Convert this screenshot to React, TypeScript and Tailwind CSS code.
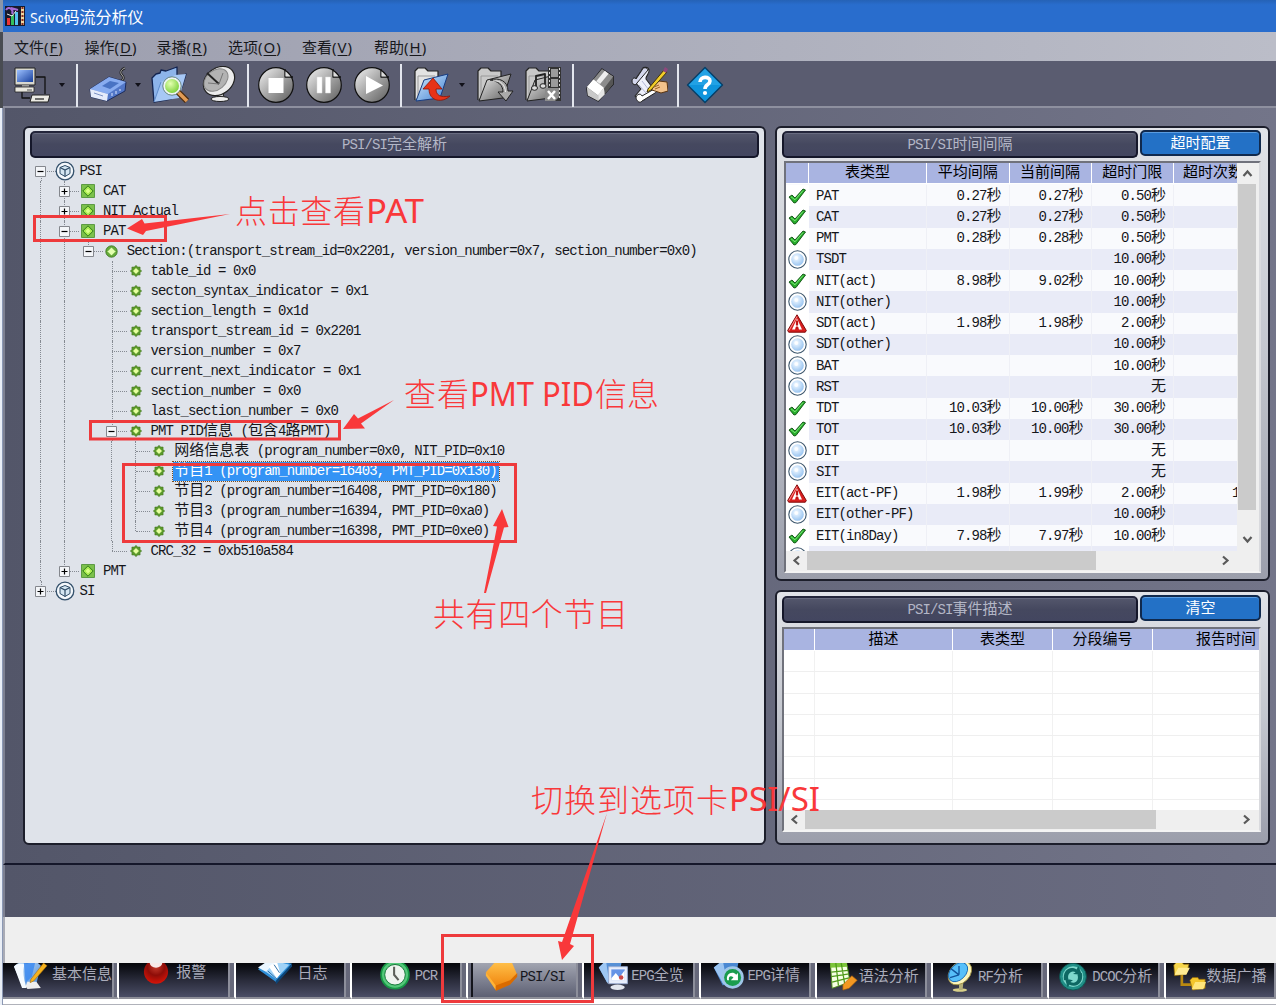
import React from 'react';

const CJK = /([\u2e80-\u9fff\uff00-\uffef]+)/;

/* Mixed text: 7.5px Latin cells and 15px Chinese cells */
function T({ children }: { children: string }) {
  return (
    <span className="whitespace-pre font-['Liberation_Mono','Noto_Sans_CJK_SC',monospace] text-[14px] leading-[20px] tracking-[-0.9px]">
      {children.split(CJK).map((s, i) =>
        i % 2 ? (
          <span key={i} className="font-['Noto_Sans_CJK_SC',sans-serif] text-[15px] leading-[16px] tracking-normal">
            {s}
          </span>
        ) : (
          s
        ),
      )}
    </span>
  );
}

/* ---------- gradients shared by the icons ---------- */
function Defs() {
  return (
    <svg className="absolute h-0 w-0">
      <defs>
        <linearGradient id="gray" x1="0" y1="0" x2="1" y2="1">
          <stop offset="0" stopColor="#f4f4f4" />
          <stop offset=".5" stopColor="#a5a5a5" />
          <stop offset="1" stopColor="#5c5c5c" />
        </linearGradient>
        <linearGradient id="blue" x1="0" y1="0" x2="1" y2="1">
          <stop offset="0" stopColor="#d6ecff" />
          <stop offset="1" stopColor="#3d7fd0" />
        </linearGradient>
        <linearGradient id="orange" x1="0" y1="0" x2="0" y2="1">
          <stop offset="0" stopColor="#ffc04a" />
          <stop offset="1" stopColor="#ee7d05" />
        </linearGradient>
        <linearGradient id="screen" x1="0" y1="0" x2="1" y2="1">
          <stop offset="0" stopColor="#9cc0ff" />
          <stop offset="1" stopColor="#173f9c" />
        </linearGradient>
        <radialGradient id="ball" cx=".4" cy=".35" r=".7">
          <stop offset="0" stopColor="#f6fbff" />
          <stop offset=".4" stopColor="#cfe5fb" />
          <stop offset="1" stopColor="#93c0ee" />
        </radialGradient>
        <radialGradient id="red" cx=".5" cy=".3" r=".7">
          <stop offset="0" stopColor="#c43a2c" />
          <stop offset=".5" stopColor="#8e0d08" />
          <stop offset="1" stopColor="#d81408" />
        </radialGradient>
        <radialGradient id="green" cx=".4" cy=".35" r=".7">
          <stop offset="0" stopColor="#e4ffb0" />
          <stop offset="1" stopColor="#6fcb2c" />
        </radialGradient>
      </defs>
    </svg>
  );
}

function Ico({ children, s = 38 }: { children: React.ReactNode; s?: number }) {
  return (
    <svg width={s} height={s} viewBox="0 0 38 38" className="shrink-0" strokeLinejoin="round">
      {children}
    </svg>
  );
}

const Network = () => (
  <Ico>
    <path d="M24 11h9v17M10 25v7h8" fill="none" stroke="#111" strokeWidth="1.3" />
    <path d="M3 2h20v17H3z" fill="#d9d8cf" stroke="#222" />
    <path d="M5 4h16v12H5z" fill="url(#screen)" />
    <path d="M10 19h7v2h-7z" fill="#999" />
    <path d="M3 21h19v5H3z" fill="#e9e8df" stroke="#222" strokeWidth=".8" />
    <path d="M15 24h5" stroke="#555" />
    <path d="M20 29h18l-2 7H18z" fill="#ecebe4" stroke="#222" />
    <path d="M23 33h9" stroke="#444" strokeWidth="1.5" />
  </Ico>
);
const Device = () => (
  <Ico>
    <path d="M28 15c6 1 8-3 5-6s0-6 3-7" fill="none" stroke="#222" strokeWidth="2.4" />
    <path d="M28 15c6 1 8-3 5-6s0-6 3-7" fill="none" stroke="#aaa" strokeWidth="1" />
    <path d="M1 23 20 11l17 5-1 9-18 10L2 31z" fill="#5277c8" stroke="#1d2c5c" />
    <path d="M1 23 20 11l17 5-18 12z" fill="#88acf0" />
    <path d="m13 20 8-5 9 2-9 6z" fill="#4973c4" />
    <path d="m1 23 18 5-1 7L2 31z" fill="#e5ebfa" />
    <path d="m5 27 9 3" stroke="#7b90c4" />
    <path d="M23 30v-3m4 1v-3m4 0v-2" stroke="#dce8ff" />
  </Ico>
);
const FolderFind = () => (
  <Ico>
    <path d="M1 12 5 8l4-1 1-3 5 1 11-4v12l9-5-4 13L20 33 3 36z" fill="#8db4ea" stroke="#132450" strokeWidth="1.3" />
    <path d="m3 36 7-20 14-7 11-1-7 24z" fill="#a7c8f5" />
    <path d="m3 36 7-20" stroke="#5f8ccc" />
    <path d="m27 26 9 9" stroke="#4b2a0c" strokeWidth="6" />
    <path d="m27 26 9 9" stroke="#e19b55" strokeWidth="3.5" />
    <circle cx="21" cy="20" r="8" fill="url(#green)" stroke="#eef4f4" strokeWidth="2" />
    <circle cx="21" cy="20" r="9.2" fill="none" stroke="#4d6a55" strokeWidth=".7" />
  </Ico>
);
const Dish = () => (
  <Ico>
    <path d="M18 25h5l1 8h-7z" fill="#ccc" stroke="#222" />
    <ellipse cx="20" cy="33" rx="9" ry="2.5" fill="#eee" stroke="#222" />
    <ellipse cx="19" cy="15" rx="17" ry="13" transform="rotate(-38 19 15)" fill="#ececec" stroke="#222" strokeWidth="1.2" />
    <ellipse cx="16" cy="14" rx="13.500" ry="9.500" transform="rotate(-40 16 14)" fill="#b3b3b3" stroke="#888" />
    <path d="m19 18-12-11" stroke="#222" strokeWidth="1.800" />
    <path d="M19 18 8 17m11 1 4-11" stroke="#777" />
  </Ico>
);
const Media = ({ kind }: { kind: 'stop' | 'pause' | 'play' }) => (
  <Ico>
    <circle cx="19" cy="19" r="17.300" fill="url(#gray)" stroke="#111" strokeWidth="1.200" />
    <path d="M28 3v8h8" fill="none" stroke="#111" strokeWidth="1.300" />
    <path d="M28.500 5.500v5h5z" fill="#ddd" />
    {kind === 'stop' && <path d="M11.500 12h15v15h-15z" fill="#fff" />}
    {kind === 'pause' && <path d="M12 11h5v16h-5zM20.500 11h5v16h-5z" fill="#fff" stroke="#ddd" strokeWidth=".5" />}
    {kind === 'play' && <path d="m13 10 17 9.500L13 28z" fill="#fff" />}
  </Ico>
);
const FolderBase = ({ blue = false }: { blue?: boolean }) => (
  <>
    <path d="M2 34V5l3-3h7l3 3h10v7" fill={blue ? '#e3e3e3' : '#c9c9c9'} stroke="#222" strokeWidth="1.200" />
    <path d="M5 34V10h17" fill="none" stroke="#999" />
    <path d="M3 35 11 14l24-6-8 24z" fill={blue ? 'url(#blue)' : 'url(#gray)'} stroke={blue ? '#183c80' : '#222'} />
  </>
);
const FolderUp = () => (
  <Ico>
    <FolderBase blue />
    <path d="m20 12 9 11h-6c0 6 4 9 14 7-7 7-21 6-21-7h-6z" fill="#e83317" stroke="#8a1506" strokeWidth=".8" />
  </Ico>
);
const FolderDown = () => (
  <Ico>
    <FolderBase />
    <path d="M14 14c9-3 18 1 18 11h5l-7 10-8-9h5c0-7-5-11-13-12z" fill="#aaa" stroke="#222" />
    <path d="M17 15c8-1 12 4 12.500 11" fill="none" stroke="#eee" />
  </Ico>
);
const Film = () => (
  <Ico>
    <FolderBase />
    <path d="M12 21V10l9-2v11" fill="none" stroke="#222" strokeWidth="1.800" />
    <ellipse cx="10.500" cy="22" rx="3" ry="2.300" fill="#ddd" stroke="#222" />
    <ellipse cx="19" cy="20" rx="3" ry="2.300" fill="#ddd" stroke="#222" />
    <path d="M24 1h13v34H24z" fill="#333" />
    <path d="M27 3h7v8h-7zM27 13h7v8h-7z" fill="#9b9b9b" />
    <path d="M25.500 2v32M35.500 2v32" stroke="#ddd" strokeDasharray="2 2" />
    <path d="M21 22h14v9l-4 4H21z" fill="#8c8c8c" />
    <path d="m24 25 7 8m0-8-7 8" stroke="#fff" strokeWidth="2.500" />
  </Ico>
);
const Eraser = () => (
  <Ico s={36}>
    <path d="M4 22 20 2l12 8v8L16 36 5 30z" fill="#777" stroke="#111" strokeWidth="1.200" />
    <path d="M11 13 20 2l12 8-10 13z" fill="#8c8c8c" />
    <path d="m14 15 9-11 4 3-9 11z" fill="#efefef" />
    <path d="m22 23 10-13v8l-9 11z" fill="#555" />
    <path d="m4 21 7-8 11 9-6 8z" fill="#fff" />
    <path d="m4 21 12 9v6L5 30z" fill="#c9c9c9" />
    <path d="m16 29 6-7 1 7-7 7z" fill="#e6e6e6" />
  </Ico>
);
const Scroll = () => (
  <Ico>
    <path d="M12 4c0-3 6-4 7 0s-4 6-3 9l9 12c1 3-8 4-11 9l-9-4 6-7-7-8z" fill="#eef0fb" stroke="#222" strokeWidth="1.100" />
    <path d="M2 15c0-3 3-4 4-2l6-9c1-3 5-3 6 0L7 17c-1 3-5 2-5-2z" fill="#d3d6ec" stroke="#222" />
    <path d="M6 31c1-3 5-4 6-1l14-8c2 1 1 4-1 5L12 35c-2 3-6 0-6-4z" fill="#fff" stroke="#222" />
    <path d="m9 19 7 8m-4-12 7 9" stroke="#b3b7d6" />
    <path d="m22 19 7-4 8 1 1 9-7 2-9-3z" fill="#f2c28c" stroke="#5b3512" />
    <path d="M18 23 34 4l3 2-16 18-4 2z" fill="#f2cd28" stroke="#453509" />
    <path d="m33 5 2-4 3 2-2 4z" fill="#8f477c" />
    <path d="m24 21 5-2m-4 4 5-2" stroke="#9c6224" />
  </Ico>
);
const Help = () => (
  <Ico>
    <path d="M19 1.500 36.500 19 19 36.500 1.500 19z" fill="#0f94dc" stroke="#063e66" strokeWidth="1.400" />
    <path d="M19 3 35 19H3z" fill="#35b0ee" opacity=".5" />
    <path d="M14 16c0-6 10-6 10-1 0 4-5 3-5 8" fill="none" stroke="#fff" strokeWidth="3.600" />
    <circle cx="19" cy="27" r="2.100" fill="#fff" />
  </Ico>
);

const Sep = ({ c }: { c: string }) => <div className={'h-[43px] w-[2px] shrink-0 bg-[#e3e6ee] ' + c} />;
const Drop = ({ c = '' }: { c?: string }) => (
  <svg width="6" height="4" viewBox="0 0 6 4" className={'shrink-0 ' + c}>
    <path d="M0 0h6L3 4z" fill="#101018" />
  </svg>
);
const Cell = ({ c, children }: { c: string; children: React.ReactNode }) => (
  <div className={'flex shrink-0 justify-center ' + c}>{children}</div>
);

/* ---------- tree ---------- */
type Node = { d: number; g: string; icon: 'cube' | 'box' | 'round' | 'leaf'; t: string; ex?: '+' | '-'; sel?: boolean; last?: boolean };
const L3 = 'll l';
const tree: Node[] = [
  { d: 0, g: '', icon: 'cube', t: 'PSI', ex: '-' },
  { d: 1, g: 'l', icon: 'box', t: 'CAT', ex: '+' },
  { d: 1, g: 'l', icon: 'box', t: 'NIT_Actual', ex: '+' },
  { d: 1, g: 'l', icon: 'box', t: 'PAT', ex: '-' },
  { d: 2, g: 'll', icon: 'round', t: 'Section:(transport_stream_id=0x2201, version_number=0x7, section_number=0x0)', ex: '-', last: true },
  { d: 3, g: 'll ', icon: 'leaf', t: 'table_id = 0x0' },
  { d: 3, g: 'll ', icon: 'leaf', t: 'secton_syntax_indicator = 0x1' },
  { d: 3, g: 'll ', icon: 'leaf', t: 'section_length = 0x1d' },
  { d: 3, g: 'll ', icon: 'leaf', t: 'transport_stream_id = 0x2201' },
  { d: 3, g: 'll ', icon: 'leaf', t: 'version_number = 0x7' },
  { d: 3, g: 'll ', icon: 'leaf', t: 'current_next_indicator = 0x1' },
  { d: 3, g: 'll ', icon: 'leaf', t: 'section_number = 0x0' },
  { d: 3, g: 'll ', icon: 'leaf', t: 'last_section_number = 0x0' },
  { d: 3, g: 'll ', icon: 'leaf', t: 'PMT PID信息 (包含4路PMT)', ex: '-' },
  { d: 4, g: L3, icon: 'leaf', t: '网络信息表 (program_number=0x0, NIT_PID=0x10' },
  { d: 4, g: L3, icon: 'leaf', t: '节目1 (program_number=16403, PMT_PID=0x130)', sel: true },
  { d: 4, g: L3, icon: 'leaf', t: '节目2 (program_number=16408, PMT_PID=0x180)' },
  { d: 4, g: L3, icon: 'leaf', t: '节目3 (program_number=16394, PMT_PID=0xa0)' },
  { d: 4, g: L3, icon: 'leaf', t: '节目4 (program_number=16398, PMT_PID=0xe0)', last: true },
  { d: 3, g: 'll ', icon: 'leaf', t: 'CRC_32 = 0xb510a584', last: true },
  { d: 1, g: 'l', icon: 'box', t: 'PMT', ex: '+', last: true },
  { d: 0, g: '', icon: 'cube', t: 'SI', ex: '+', last: true },
];

function TreeIcon({ k }: { k: Node['icon'] }) {
  if (k === 'cube')
    return (
      <svg width="20" height="20" viewBox="0 0 20 20" className="shrink-0">
        <circle cx="10" cy="10" r="8.800" fill="#f4f8fc" stroke="#33506b" strokeWidth="1.300" />
        <path d="m10 4.500 5 2v6L10 15.500 5 12.500v-6z" fill="#d4e6f2" stroke="#2f4c67" />
        <path d="m5 6.500 5 2.500 5-2.500M10 9v6.500" fill="none" stroke="#2f4c67" strokeWidth="1.200" />
      </svg>
    );
  if (k === 'box')
    return (
      <svg width="14" height="14" viewBox="0 0 14 14">
        <path d="M.5.500h13v13H.5z" fill="#7cc14c" stroke="#5c9a45" />
        <path d="m7 1.800 5.200 5.200L7 12.200 1.800 7z" fill="#a6ea4e" stroke="#2f7a1c" />
        <path d="m7 4.500 2.500 2.500L7 9.500 4.500 7z" fill="#d9ff8a" />
      </svg>
    );
  if (k === 'round')
    return (
      <svg width="13" height="13" viewBox="0 0 13 13">
        <circle cx="6.500" cy="6.500" r="5.700" fill="#67ad39" stroke="#356e1d" strokeWidth=".8" />
        <path d="m6.500 2 4.500 4.500L6.500 11 2 6.500z" fill="#e3ffae" stroke="#4d9429" strokeWidth=".8" />
      </svg>
    );
  return (
    <svg width="12" height="12" viewBox="0 0 12 12">
      <path d="M6 .3 7.600 2h2.500v2.400L11.700 6l-1.600 1.600V10H7.600L6 11.700 4.400 10H1.900V7.600L.3 6l1.600-1.600V2h2.500z" fill="#5c9a2c" stroke="#3d6f1d" strokeWidth=".5" />
      <path d="m6 3 3 3-3 3-3-3z" fill="#e6ffa0" />
    </svg>
  );
}

function TreeRow({ n, i }: { n: Node; i: number }) {
  return (
    <div className="flex h-[20px] items-center">
      {Array.from({ length: n.d }, (_, k) => (
        <div key={k} className="flex h-full w-[23.700px] shrink-0 justify-center">
          {n.g[k] === 'l' && <div className="h-full border-l border-dotted border-[#858a92]" />}
        </div>
      ))}
      <div className="relative flex h-full w-[23.700px] shrink-0 items-center justify-center">
        <div className={'absolute left-[11.500px] border-l border-dotted border-[#858a92] ' + (i === 0 ? 'top-[10px] h-[10px]' : n.last ? 'top-0 h-[10px]' : 'top-0 h-full')} />
        <div className="absolute left-[12px] right-[-3px] top-[10px] border-t border-dotted border-[#858a92]" />
        {n.ex && (
          <svg width="11" height="11" viewBox="0 0 11 11" className="relative">
            <path d="M.5.500h10v10H.5z" fill="#f4f6f9" stroke="#84878d" />
            <path d={n.ex === '+' ? 'M2.500 5.500h6M5.500 2.500v6' : 'M2.500 5.500h6'} stroke="#000" strokeWidth="1.200" />
          </svg>
        )}
      </div>
      <div className="relative flex w-[23.700px] shrink-0 items-center justify-center">
        <TreeIcon k={n.icon} />
      </div>
      <div
        className={
          n.sel
            ? 'ml-[2px] flex h-[19px] items-center bg-[#3393f5] pl-[1px] pr-[2px] text-white outline-dotted outline-1 outline-[#7a4d20]'
            : 'ml-[3px] flex h-[19px] items-center text-[#15161a]'
        }
      >
        <T>{n.t}</T>
      </div>
    </div>
  );
}

/* ---------- tables ---------- */
const rows: [string, string, string, string, string][] = [
  ['ok', 'PAT', '0.27', '0.27', '0.50'],
  ['ok', 'CAT', '0.27', '0.27', '0.50'],
  ['ok', 'PMT', '0.28', '0.28', '0.50'],
  ['no', 'TSDT', '', '', '10.00'],
  ['ok', 'NIT(act)', '8.98', '9.02', '10.00'],
  ['no', 'NIT(other)', '', '', '10.00'],
  ['err', 'SDT(act)', '1.98', '1.98', '2.00'],
  ['no', 'SDT(other)', '', '', '10.00'],
  ['no', 'BAT', '', '', '10.00'],
  ['no', 'RST', '', '', '无'],
  ['ok', 'TDT', '10.03', '10.00', '30.00'],
  ['ok', 'TOT', '10.03', '10.00', '30.00'],
  ['no', 'DIT', '', '', '无'],
  ['no', 'SIT', '', '', '无'],
  ['err', 'EIT(act-PF)', '1.98', '1.99', '2.00'],
  ['no', 'EIT(other-PF)', '', '', '10.00'],
  ['ok', 'EIT(in8Day)', '7.98', '7.97', '10.00'],
  ['no', '', '', '', ''],
];

function Status({ k }: { k: string }) {
  if (k === 'ok')
    return (
      <svg width="18" height="16" viewBox="0 0 18 16">
        <path d="m1 9 3-2 3 3 8-9 2.500 1L8 14.500 6 15z" fill="#27ad2b" stroke="#0c4d10" strokeWidth=".9" />
        <path d="m3 8.800 4 3L15 2.500" fill="none" stroke="#7fe57a" />
      </svg>
    );
  if (k === 'err')
    return (
      <svg width="20" height="19" viewBox="0 0 20 19">
        <path d="M10 .8 19.300 16.500l-1 1.700H1.700l-1-1.700z" fill="#d81f1f" stroke="#7e0a0a" />
        <path d="m10 2.500-8 14" stroke="#ff8b8b" />
        <path d="m10 4.500 5 11h-3l-1-3H9l-1 3H5z" fill="#fff" />
        <path d="M10 6.500v5M10 13v2.200" stroke="#c01515" strokeWidth="2.200" />
      </svg>
    );
  return (
    <svg width="19" height="19" viewBox="0 0 19 19">
      <circle cx="9.500" cy="9.500" r="8.700" fill="#fff" stroke="#3c566c" strokeWidth="1.100" />
      <circle cx="9.500" cy="9.500" r="6.300" fill="url(#ball)" />
      <circle cx="8.300" cy="8" r="2" fill="#fff" opacity=".8" />
    </svg>
  );
}

const sec = (v: string) => (v && v !== '无' ? v + '秒' : v);
const COLS = 'grid grid-cols-[23px_118px_82.500px_82px_82.500px_63px]';
const EV = 'grid grid-cols-[31px_138px_100px_100px_106px]';
const heads = ['', '表类型', '平均间隔', '当前间隔', '超时门限'];

const Chev = ({ r }: { r: string }) => (
  <svg width="11" height="11" viewBox="0 0 11 11" className={'shrink-0 ' + r}>
    <path d="m1.500 8 4-4.500 4 4.500" fill="none" stroke="#5a5a5a" strokeWidth="2.200" />
  </svg>
);

function Bar({ children, c }: { children: string; c: string }) {
  return (
    <div className={'flex items-center justify-center rounded-[5px] border-2 border-[#15172a] border-t-[#23253a] bg-gradient-to-b from-[#54576c] via-[#45485f] to-[#434660] text-[#b3b6c6] shadow-[inset_0_1px_0_#686b80] ' + c}>
      <T>{children}</T>
    </div>
  );
}
function Btn({ children }: { children: string }) {
  return (
    <div className="flex h-[26px] w-[121px] items-center justify-center rounded-[5px] border-2 border-[#10294d] bg-[#2371c6] pt-[1px] text-white shadow-[inset_0_1px_0_#5a9ce0]">
      <T>{children}</T>
    </div>
  );
}

const panel = 'rounded-[6px] border-2 border-[#1c1e2b]';

/* ---------- bottom tabs ---------- */
const tabIcons: React.ReactNode[] = [
  <>
    <path d="M0 6C6-2 12 4 17 2s9-2 13 3l-6 24H10z" fill="url(#blue)" />
    <path d="M0 6c5-5 8-2 12-3-3 8-1 17 2 27h-5z" fill="#f5faff" />
    <path d="m11 2 13-2-4 17-7 7z" fill="#3c89f0" opacity=".85" />
    <path d="m13 28 2-5h10l5 7-15 1z" fill="#eee" />
    <path d="m19 20 14-18 4 3-15 17-4 2z" fill="#f5b21e" stroke="#9d6508" strokeWidth=".6" />
  </>,
  <>
    <circle cx="19" cy="14" r="13.500" fill="url(#red)" />
    <ellipse cx="19" cy="4" rx="7" ry="5.500" fill="#fff" opacity=".9" />
  </>,
  <>
    <path d="M0 10 13-1l25 5-17 21z" fill="#2f8fd8" />
    <path d="m0 8 14-9 9 3-10 13z" fill="#eaf6ff" />
    <path d="m9 13 11-12 15 4-15 16z" fill="#9fd2f7" />
    <path d="m12 7 9-6 4 14-4 5z" fill="#fff" />
    <path d="m11 12 10 9M18 5l6 9" stroke="#1b629f" />
    <path d="m20 23 18-19v3L20 27z" fill="#0d4577" />
  </>,
  <>
    <circle cx="19" cy="14" r="16.500" fill="#179846" />
    <circle cx="19" cy="14" r="14.500" fill="#54c87a" />
    <circle cx="19" cy="14" r="11.500" fill="#eef4ef" stroke="#0b6e2f" />
    <path d="M18 5v9l5 6" fill="none" stroke="#5c605a" strokeWidth="2.300" />
  </>,
  <>
    <path d="M1 10 11-1h19l6 14-8 9-16 8z" fill="url(#orange)" />
    <path d="m1 10 11 15v5L1 14z" fill="#ffb437" />
    <path d="m12 25 16-6 8-8v4l-8 9-16 7z" fill="#d96b00" />
  </>,
  <>
    <path d="M2 6 10-2h18l-5 22-12 2z" fill="#5790d5" />
    <path d="m2 6 8-8 3 20-1 6z" fill="#9ec7f3" />
    <path d="M13 5h21v19H13z" fill="#e8eefc" stroke="#9aacd2" />
    <path d="M16 8h15v12H16z" fill="#6593e6" />
    <path d="m16 18 5-6 4 5 6-8v11H16z" fill="#fff" />
    <circle cx="27" cy="17" r="2.500" fill="#cc4848" />
    <ellipse cx="23" cy="28" rx="8" ry="3" fill="#e3e6ee" />
  </>,
  <>
    <path d="M2 6 12-2h18l-4 20-14 8z" fill="#4a88d2" />
    <path d="m2 6 10-8 3 15-2 12z" fill="#9cc5f1" />
    <circle cx="23" cy="17" r="12.500" fill="#9fc6e8" />
    <circle cx="23" cy="17" r="9.500" fill="#1a9c4e" />
    <path d="M17 20c-2-7 6-11 10-6l2-2v8h-8l3-3c-3-3-6-1-5 3z" fill="#fff" />
  </>,
  <>
    <path d="M6-1h18l4 22-20 7z" fill="#f6ffe3" stroke="#4e8c1a" />
    <path d="M6-1h18l1 5-19 1z" fill="#7cc43a" />
    <path d="m7 10 19-2M7 15l20-3M8 21l20-5M12-1l3 26M18-1l4 24" stroke="#4e9a1a" strokeWidth="1.400" />
    <path d="m20 24 10-10 6 5-9 9-7 2z" fill="#f39822" stroke="#a85d08" strokeWidth=".7" />
  </>,
  <>
    <ellipse cx="20" cy="30" rx="8" ry="2" fill="#d7cf88" />
    <path d="M19 20h5l-1 10h-4z" fill="#b4ae78" />
    <ellipse cx="20" cy="11" rx="15" ry="11" transform="rotate(-45 20 11)" fill="#fcf5bc" stroke="#a09244" />
    <ellipse cx="18" cy="10" rx="12.500" ry="8.500" transform="rotate(-45 18 10)" fill="#57c0fa" stroke="#1565b2" />
    <path d="M19 13 10 6m9 7-10 3m10-3V3" stroke="#12549c" strokeWidth="1.500" />
  </>,
  <>
    <circle cx="19" cy="15" r="15" fill="#218f87" stroke="#0a544f" />
    <circle cx="19" cy="15" r="11.500" fill="#7fd8cc" />
    <path d="M9 19C7 9 15 2 23 7l2-4 4 10-10-1 3-2c-5-3-10 2-8 8zM29 11c2 10-5 17-14 13l-2 3-3-10 9 2-3 2c6 3 10-2 8-8z" fill="#0e6863" />
  </>,
  <>
    <path d="M11 13v11h11" fill="none" stroke="#bb8a10" strokeWidth="3" />
    <path d="M2 2 5-1h6l2 2h6l-3 11-13 2z" fill="#f6d64c" stroke="#92690a" strokeWidth=".8" />
    <path d="m3 13 4-8h13l-4 8z" fill="#ffeb91" />
    <path d="m20 19 3-3h6l1 2h7v10l-14 2z" fill="#f4c62c" stroke="#92690a" strokeWidth=".8" />
    <path d="m22 29 4-8h12l-3 8z" fill="#ffe67c" />
  </>,
];
const tabs: [string, string][] = [
  ['基本信息', 'pl-[11px] gap-[4px] pb-[10px]'],
  ['报警', 'pl-[20px] gap-[3px] pb-[14px]'],
  ['日志', 'pl-[22px] gap-[6px] pb-[13px]'],
  ['PCR', 'pl-[26px] gap-[3px] pb-[8px]'],
  ['PSI/SI', 'pl-[12px] gap-[1px] pb-[6px]'],
  ['EPG全览', 'pl-[13px] gap-[0px] pb-[8px]'],
  ['EPG详情', 'pl-[11px] gap-[2px] pb-[8px]'],
  ['语法分析', 'pl-[8px] gap-[0px] pb-[7px]'],
  ['RF分析', 'pl-[9px] gap-[2px] pb-[7px]'],
  ['DCOC分析', 'pl-[7px] gap-[2px] pb-[7px]'],
  ['数据广播', 'pl-[6px] gap-[1px] pb-[7px]'],
];

const menus: [string, string, string][] = [
  ['文件', 'F', 'w-[70.500px]'],
  ['操作', 'D', 'w-[72px]'],
  ['录播', 'R', 'w-[71.500px]'],
  ['选项', 'O', 'w-[74px]'],
  ['查看', 'V', 'w-[72px]'],
  ['帮助', 'H', 'w-[72px]'],
];

function Annotations() {
  const cn = { fontFamily: '"Noto Sans CJK SC", sans-serif', fontWeight: 300, fontSize: 32 };
  const la = { fontFamily: '"Noto Sans", sans-serif', fontSize: 32 };
  return (
    <svg className="pointer-events-none absolute left-0 top-0" width="1276" height="1005" fill="#f9383a">
      <g fill="none" stroke="#ee3a3c" strokeWidth="3">
        <rect x="34.500" y="216.500" width="131" height="24" />
        <rect x="90.500" y="421.500" width="249" height="17.500" />
        <rect x="123.500" y="464.500" width="392" height="77" />
        <rect x="442.500" y="935.500" width="150" height="66" />
      </g>
      <path d="m127 228.500 15-9.500 2.500 4.500L230 214l-84 17-3 4z" />
      <path d="m343 429 11-15 4 4.500 36-18.500-33 23.500 4 5z" />
      <path d="m502 509-9 17 4 .5L484 593l2 0 18-65.500 4.500-.5z" />
      <path d="m562 960-4-19 4 1L607 813l-37 131 4 2z" />
      <text x="235" y="223" style={cn} textLength="130">点击查看</text>
      <text x="366" y="223" style={la} textLength="58" lengthAdjust="spacingAndGlyphs">PAT</text>
      <text x="404" y="405.500" style={cn} textLength="65">查看</text>
      <text x="470" y="405.500" style={la} textLength="124" lengthAdjust="spacingAndGlyphs">PMT PID</text>
      <text x="595" y="405.500" style={cn} textLength="64">信息</text>
      <text x="433" y="626" style={cn} textLength="195">共有四个节目</text>
      <text x="531" y="812" style={cn} textLength="197">切换到选项卡</text>
      <text x="729" y="811" style={la} textLength="91" lengthAdjust="spacingAndGlyphs">PSI/SI</text>
    </svg>
  );
}

export default function App() {
  return (
    <div className="relative flex h-[1005px] w-[1276px] overflow-hidden font-['Noto_Sans_CJK_SC',sans-serif]">
      <Defs />
      <div className="flex w-[3px] shrink-0 flex-col">
        <div className="h-[32px] bg-[#8a95a8]" />
        <div className="h-[76px] bg-[#494c52]" />
        <div className="flex-1 border-r border-[#8b98b4] bg-[#e9eef6]" />
      </div>

      <div className="flex min-w-0 flex-1 flex-col">
        {/* title bar */}
        <div className="flex h-[32px] shrink-0 items-center gap-[5px] bg-gradient-to-b from-[#2562b6] from-0% via-[#296dcd] via-15% to-[#296dcd] pl-[2px]">
          <svg width="20" height="20" viewBox="0 0 20 20">
            <path d="M0 0h20v20H0z" fill="#171a2c" />
            <path d="M1 4c3-5 8 0 6 4M6 2l7 2" fill="none" stroke="#a56ad6" strokeWidth="2" />
            <path d="M2 19v-7h3v7z" fill="#e33" />
            <path d="M6 19V9h3v10z" fill="#34c05e" />
            <path d="M10 19V6h3v13z" fill="#57c3ef" />
            <path d="M16 1h3v18h-3z" fill="#f0d7a0" />
            <path d="M17.500 1v18" stroke="#8b2d20" strokeDasharray="2 2" strokeWidth="2" />
            <path d="m2 8 5 2 4-5" stroke="#eee" fill="none" />
          </svg>
          <span className="font-['Noto_Sans','Noto_Sans_CJK_SC',sans-serif] text-[14px] leading-none text-white">
            Scivo<span className="font-['Noto_Sans_CJK_SC',sans-serif] text-[16px]">码流分析仪</span>
          </span>
        </div>

        {/* menu */}
        <div className="flex h-[29px] shrink-0 items-center bg-gradient-to-r from-[#9c9eae] to-[#bbbdc8] pl-[11px] text-[15px] leading-none text-[#17181c]">
          {menus.map(([m, k, w]) => (
            <span key={m} className={'whitespace-nowrap ' + w}>
              {m}
              <span className="font-['Noto_Sans',sans-serif] text-[15px] tracking-[1px]">
                (<u className="underline-offset-2">{k}</u>)
              </span>
            </span>
          ))}
        </div>

        {/* toolbar */}
        <div className="flex h-[47px] shrink-0 items-center border-b-2 border-[#8e909f] bg-[#5a5c70] pt-[3px]">
          <Cell c="w-[56px]"><Network /></Cell>
          <Drop />
          <Sep c="ml-[11px]" />
          <Cell c="w-[57px] pl-[3px]"><Device /></Cell>
          <Drop />
          <Cell c="w-[58px]"><FolderFind /></Cell>
          <Cell c="w-[40px]"><Dish /></Cell>
          <Sep c="ml-[8px]" />
          <Cell c="ml-[3px] w-[48px]"><Media kind="stop" /></Cell>
          <Cell c="w-[48px]"><Media kind="pause" /></Cell>
          <Cell c="w-[48px]"><Media kind="play" /></Cell>
          <Sep c="ml-[4px]" />
          <Cell c="ml-[3px] w-[54px]"><FolderUp /></Cell>
          <Drop />
          <Cell c="ml-[6px] w-[48px]"><FolderDown /></Cell>
          <Cell c="w-[48px]"><Film /></Cell>
          <Sep c="ml-[5px]" />
          <Cell c="ml-[3px] w-[48px]"><Eraser /></Cell>
          <Cell c="w-[47px]"><Scroll /></Cell>
          <Sep c="ml-[5px]" />
          <Cell c="ml-[2px] w-[48px]"><Help /></Cell>
        </div>

        {/* work area */}
        <div className="flex h-[757px] shrink-0 gap-[9px] border-b-2 border-l-2 border-b-[#15172a] border-l-[#7e8192] bg-gradient-to-r from-[#535669] to-[#737589] pl-[18px] pt-[18px]">
          <div className={panel + ' h-[719px] w-[743px] shrink-0 bg-[#dfe3ea] pl-[4px] pt-[3px]'}>
            <Bar c="ml-px h-[27px] w-[729px]">PSI/SI完全解析</Bar>
            <div className="pl-0 pt-[3px]">
              {tree.map((n, i) => (
                <TreeRow key={i} n={n} i={i} />
              ))}
            </div>
          </div>

          <div className="flex w-[495px] shrink-0 flex-col gap-[9px]">
            <div className={panel + ' h-[455px] bg-gradient-to-b from-[#e1e3e8] via-[#c3c6ce] to-[#9b9eab] pl-[5px] pt-[2px]'}>
              <div className="flex gap-[2px]">
                <Bar c="mt-px h-[27px] w-[356px]">PSI/SI时间间隔</Bar>
                <Btn>超时配置</Btn>
              </div>
              <div className="ml-[2px] mt-[3px] flex h-[412px] w-[477px] flex-col border-2 border-b-[#f4f4f4] border-l-[#70727c] border-r-[#d9dade] border-t-[#70727c] bg-[#efefef]">
                <div className="flex h-[388px]">
                  <div className="w-[451px] shrink-0 overflow-hidden bg-[#f9fafd]">
                    <div className={COLS + ' h-[21px] border-b border-white bg-[#a9b4e1] text-black'}>
                      {heads.map((h, i) => (
                        <div key={i} className="flex items-center justify-center border-r border-white">
                          <T>{h}</T>
                        </div>
                      ))}
                      <div className="flex items-center pl-[9px]">
                        <T>超时次数</T>
                      </div>
                    </div>
                    <div className="pt-[1px]">
                      {rows.map((r, i) => (
                        <div key={i} className={COLS + ' h-[21.250px] text-[#15161a] ' + (i % 2 ? 'bg-[#e9ebf7]' : 'bg-[#f9fafd]')}>
                          <div className="flex items-center justify-center bg-white pr-[1px]">
                            <Status k={r[0]} />
                          </div>
                          <div className="flex items-center border-r border-[#eff0f6] pl-[7px]">
                            <T>{r[1]}</T>
                          </div>
                          {[2, 3, 4].map((c) => (
                            <div key={c} className="flex items-center justify-end border-r border-[#eff0f6] pr-[7px]">
                              <T>{sec(r[c])}</T>
                            </div>
                          ))}
                          <div className="flex w-[63px] items-center overflow-hidden pl-[58px]">{i === 14 && <T>1</T>}</div>
                        </div>
                      ))}
                    </div>
                  </div>
                  <div className="flex w-[20px] flex-col items-center">
                    <div className="flex h-[21px] items-center"><Chev r="" /></div>
                    <div className="h-[326px] w-[18px] bg-[#cbcbcb]" />
                    <div className="mt-[24px]"><Chev r="rotate-180" /></div>
                  </div>
                </div>
                <div className="flex h-[19px] items-center pl-[5px]">
                  <Chev r="-rotate-90" />
                  <div className="ml-[5px] h-[19px] w-[289px] bg-[#cbcbcb]" />
                  <Chev r="ml-[124px] rotate-90" />
                </div>
              </div>
            </div>

            <div className={panel + ' h-[255px] bg-gradient-to-b from-[#e1e3e8] via-[#c3c6ce] to-[#9b9eab] pl-[5px] pt-[3px]'}>
              <div className="flex gap-[2px]">
                <Bar c="mt-px h-[27px] w-[356px]">PSI/SI事件描述</Bar>
                <Btn>清空</Btn>
              </div>
              <div className="mt-[4px] flex h-[205px] w-[479px] flex-col border-2 border-b-[#f4f4f4] border-l-[#70727c] border-r-[#d9dade] border-t-[#70727c] bg-[#efefef]">
                <div className={EV + ' h-[21px] shrink-0 bg-[#a9b4e1] text-black'}>
                  {['', '描述', '表类型', '分段编号'].map((h, i) => (
                    <div key={i} className="flex items-center justify-center border-r border-white">
                      <T>{h}</T>
                    </div>
                  ))}
                  <div className="flex items-center justify-end pr-[3px]">
                    <T>报告时间</T>
                  </div>
                </div>
                <div className="h-[160px] shrink-0 overflow-hidden bg-white pt-[1px]">
                  {Array.from({ length: 8 }, (_, i) => (
                    <div key={i} className={EV + ' h-[21.300px] border-b border-[#efefef]'}>
                      {[0, 1, 2, 3].map((c) => (
                        <div key={c} className="border-r border-[#f1f1f1]" />
                      ))}
                    </div>
                  ))}
                </div>
                <div className="flex h-[19px] items-center pl-[5px]">
                  <Chev r="-rotate-90" />
                  <div className="ml-[5px] h-[19px] w-[351px] bg-[#cbcbcb]" />
                  <Chev r="ml-[85px] rotate-90" />
                </div>
              </div>
            </div>
          </div>
        </div>

        {/* lower band */}
        <div className="h-[52px] shrink-0 border-l-2 border-l-[#7e8192] bg-gradient-to-r from-[#535669] to-[#6b6d82]" />
        <div className="h-[46px] shrink-0 border-l-2 border-l-[#a9abb5] bg-[#efefef]" />

        {/* tabs */}
        <div className="flex h-[36px] shrink-0 overflow-hidden bg-[#5f6173]">
          {tabs.map(([t, c], i) => (
            <div
              key={t}
              className="flex w-[116.250px] shrink-0 border-b-2 border-r-2 border-b-[#8d8e98] border-r-white bg-[#66687a] pr-[4px]"
            >
              <div
                className={
                  'flex flex-1 items-center border-r-2 border-[#8d8f9b] ' +
                  (i === 4
                    ? 'ml-[3px] border-l-2 border-l-[#14151c] bg-gradient-to-b from-[#a2a5b1] to-[#5d6073] text-[#15161c] '
                    : 'bg-gradient-to-b from-[#06070b] via-[#292b3a] to-[#4b4e66] text-[#a9abba] ') +
                  c
                }
              >
                <svg width="34" height="30" viewBox="0 0 38 33" className="mt-[2px] shrink-0">
                  {tabIcons[i]}
                </svg>
                <T>{t}</T>
              </div>
            </div>
          ))}
        </div>
        <div className="h-[5px] shrink-0 bg-white" />
        <div className="h-[1px] shrink-0 bg-[#b0b2ba]" />
      </div>

      <Annotations />
    </div>
  );
}
